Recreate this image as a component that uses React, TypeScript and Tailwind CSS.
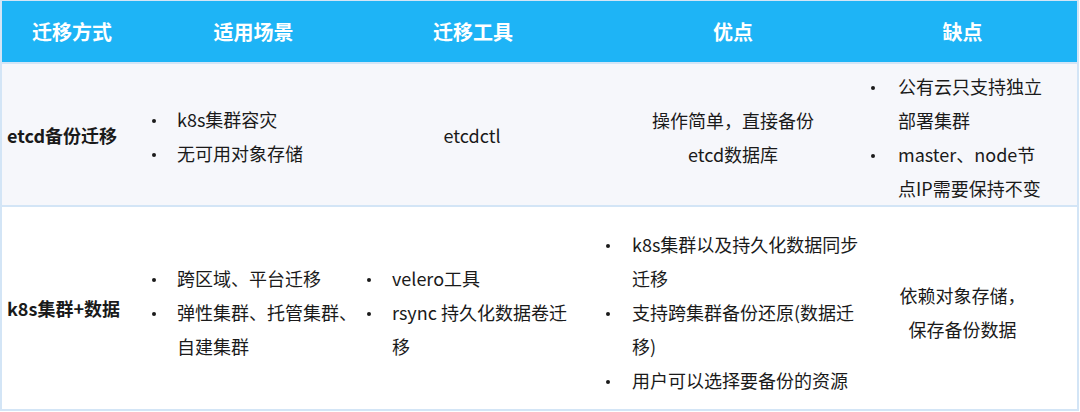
import React from "react";

const font = { fontFamily: '"Noto Sans CJK SC", "Noto Sans", sans-serif' };

const Bullets = ({ items, dot }: { items: string[][]; dot: string }) => (
  <ul className="flex flex-col">
    {items.map((lines, i) => (
      <li key={i} className="flex">
        <span className={`${dot} flex h-[34px] shrink-0 items-center`}>
          <span className="h-[4px] w-[4px] translate-y-[2px] rounded-full bg-[#1a1a1a]" />
        </span>
        <span className="flex flex-col">
          {lines.map((l, j) => (
            <span key={j} className="whitespace-nowrap">
              {l}
            </span>
          ))}
        </span>
      </li>
    ))}
  </ul>
);

const Lines = ({ lines }: { lines: string[] }) => (
  <div className="flex flex-col items-center">
    {lines.map((l, i) => (
      <span key={i} className="whitespace-nowrap">
        {l}
      </span>
    ))}
  </div>
);

export default function App() {
  return (
    <div
      className="h-[412px] w-[1080px] bg-white text-[18px] leading-[34px] text-[#1a1a1a]"
      style={font}
    >
      <div className="h-[411px] w-[1079px] border-x-2 border-b-2 border-t border-[#d3e5f6]">
        {/* header */}
        <div className="grid h-[61px] grid-cols-[138px_215px_240px_270px_211px] items-center bg-[#1eb4f6] text-[20px] font-bold text-white">
          <div className="pl-[2px] text-center">迁移方式</div>
          <div className="pl-[12px] text-center">适用场景</div>
          <div className="pr-[4px] text-center">迁移工具</div>
          <div className="pl-[6px] text-center">优点</div>
          <div className="pr-[16px] text-center">缺点</div>
        </div>

        {/* row 1 */}
        <div className="grid h-[143px] grid-cols-[138px_215px_240px_270px_211px] border-t-2 border-[#d3e5f6] bg-[#f6f7fb]">
          <div className="flex items-center pl-[5px] font-bold">etcd备份迁移</div>
          <div className="flex items-center pt-[3px]">
            <Bullets dot="w-[37px] pl-[12px]" items={[["k8s集群容灾"], ["无可用对象存储"]]} />
          </div>
          <div className="flex items-center justify-center pr-[6px]">etcdctl</div>
          <div className="flex items-center justify-center pl-[6px] pt-[4px]">
            <Lines lines={["操作简单，直接备份", "etcd数据库"]} />
          </div>
          <div className="flex items-center pt-[4px]">
            <Bullets
              dot="w-[33px] pl-[6px]"
              items={[
                ["公有云只支持独立", "部署集群"],
                ["master、node节", "点IP需要保持不变"],
              ]}
            />
          </div>
        </div>

        {/* row 2 */}
        <div className="grid h-[204px] grid-cols-[138px_215px_240px_270px_211px] border-t-2 border-[#d3e5f6] bg-white">
          <div className="flex items-center pl-[5px] font-bold">k8s集群+数据</div>
          <div className="flex items-center pt-[8px]">
            <Bullets
              dot="w-[37px] pl-[12px]"
              items={[["跨区域、平台迁移"], ["弹性集群、托管集群、", "自建集群"]]}
            />
          </div>
          <div className="flex items-center pt-[8px]">
            <Bullets
              dot="w-[37px] pl-[12px]"
              items={[["velero工具"], ["rsync 持久化数据卷迁", "移"]]}
            />
          </div>
          <div className="flex items-center pt-[8px]">
            <Bullets
              dot="w-[37px] pl-[11px]"
              items={[
                ["k8s集群以及持久化数据同步", "迁移"],
                ["支持跨集群备份还原(数据迁", "移)"],
                ["用户可以选择要备份的资源"],
              ]}
            />
          </div>
          <div className="flex items-center justify-center pr-[16px] pt-[8px]">
            <Lines lines={["依赖对象存储，", "保存备份数据"]} />
          </div>
        </div>
      </div>
    </div>
  );
}
